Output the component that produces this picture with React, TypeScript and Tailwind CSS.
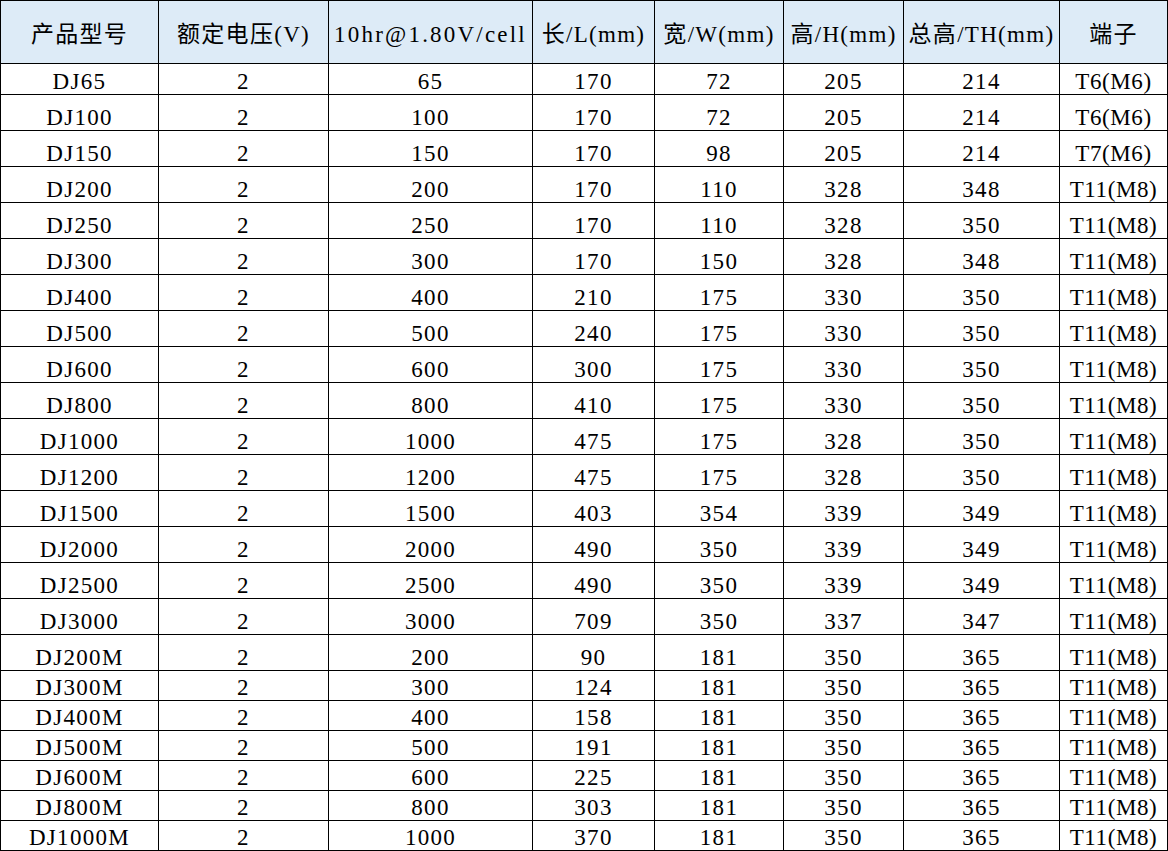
const cols = [
  'w-[158px]',
  'w-[170px]',
  'w-[204px]',
  'w-[122px]',
  'w-[129px]',
  'w-[120px]',
  'w-[156px]',
  'w-[108px]',
]

const headers = ['产品型号', '额定电压(V)', '10hr@1.80V/cell', '长/L(mm)', '宽/W(mm)', '高/H(mm)', '总高/TH(mm)', '端子']

const rows: string[][] = [
  ['DJ65', '2', '65', '170', '72', '205', '214', 'T6(M6)'],
  ['DJ100', '2', '100', '170', '72', '205', '214', 'T6(M6)'],
  ['DJ150', '2', '150', '170', '98', '205', '214', 'T7(M6)'],
  ['DJ200', '2', '200', '170', '110', '328', '348', 'T11(M8)'],
  ['DJ250', '2', '250', '170', '110', '328', '350', 'T11(M8)'],
  ['DJ300', '2', '300', '170', '150', '328', '348', 'T11(M8)'],
  ['DJ400', '2', '400', '210', '175', '330', '350', 'T11(M8)'],
  ['DJ500', '2', '500', '240', '175', '330', '350', 'T11(M8)'],
  ['DJ600', '2', '600', '300', '175', '330', '350', 'T11(M8)'],
  ['DJ800', '2', '800', '410', '175', '330', '350', 'T11(M8)'],
  ['DJ1000', '2', '1000', '475', '175', '328', '350', 'T11(M8)'],
  ['DJ1200', '2', '1200', '475', '175', '328', '350', 'T11(M8)'],
  ['DJ1500', '2', '1500', '403', '354', '339', '349', 'T11(M8)'],
  ['DJ2000', '2', '2000', '490', '350', '339', '349', 'T11(M8)'],
  ['DJ2500', '2', '2500', '490', '350', '339', '349', 'T11(M8)'],
  ['DJ3000', '2', '3000', '709', '350', '337', '347', 'T11(M8)'],
  ['DJ200M', '2', '200', '90', '181', '350', '365', 'T11(M8)'],
  ['DJ300M', '2', '300', '124', '181', '350', '365', 'T11(M8)'],
  ['DJ400M', '2', '400', '158', '181', '350', '365', 'T11(M8)'],
  ['DJ500M', '2', '500', '191', '181', '350', '365', 'T11(M8)'],
  ['DJ600M', '2', '600', '225', '181', '350', '365', 'T11(M8)'],
  ['DJ800M', '2', '800', '303', '181', '350', '365', 'T11(M8)'],
  ['DJ1000M', '2', '1000', '370', '181', '350', '365', 'T11(M8)'],
]

// excel rows: first one short, then 36px, the M series is tighter
function rowHeight(i: number) {
  if (i === 0) return 'h-[31px]'
  if (i <= 16) return 'h-[36px]'
  return 'h-[30px]'
}

export default function App() {
  return (
    <div
      className="w-[1168px] h-[851px] bg-white text-black text-[23px] tracking-[1.3px]"
      style={{ fontFamily: '"Liberation Serif", "Noto Sans CJK SC", serif' }}
    >
      <div className="border-t border-l border-black w-[1168px]">
        <div className="flex h-[63px] bg-[#ddebf7]">
          {headers.map((h, i) => (
            <div
              key={h}
              className={`${cols[i]} shrink-0 border-r border-b border-black flex items-center justify-center pt-1 leading-none whitespace-nowrap ${i === 2 ? 'tracking-[2.2px]' : ''}`}
            >
              {h}
            </div>
          ))}
        </div>
        {rows.map((r, ri) => (
          <div key={r[0]} className={`flex ${rowHeight(ri)}`}>
            {r.map((v, ci) => (
              <div
                key={ci}
                className={`${cols[ci]} shrink-0 border-r border-b border-black flex items-end justify-center pb-[1px] leading-[22px] whitespace-nowrap ${ci === 7 ? 'tracking-[0.6px]' : ''}`}
              >
                {v}
              </div>
            ))}
          </div>
        ))}
      </div>
    </div>
  )
}
